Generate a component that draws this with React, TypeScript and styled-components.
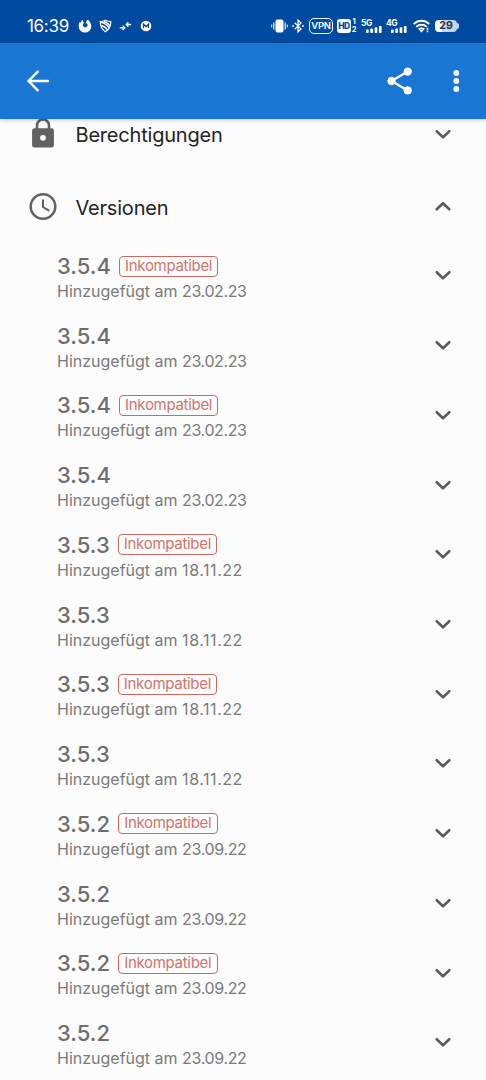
import React from 'react';
import styled, { createGlobalStyle } from 'styled-components';

const GlobalStyle = createGlobalStyle`
  *, *::before, *::after { box-sizing: border-box; }
  body { margin: 0; background: #fcfcfc; font-family: Inter, Roboto, "Liberation Sans", sans-serif; }
  svg { display: block; flex: none; }
`;

const Screen = styled.div`
  width: 486px;
  height: 1080px;
  display: flex;
  flex-direction: column;
  overflow: hidden;
  background: #fcfcfc;
`;

const StatusBar = styled.header`
  height: 43px;
  flex: none;
  display: flex;
  align-items: center;
  padding: 9px 27px 0 27px;
  background: #004a9f;
  color: #fff;
`;

const Clock = styled.span`
  width: 51px;
  font-size: 17px;
  line-height: 20px;
  font-weight: 400;
  letter-spacing: -0.3px;
  white-space: nowrap;
`;

const StatusGroup = styled.div<{ $end?: boolean }>`
  display: flex;
  align-items: center;
  margin-left: ${(p) => (p.$end ? 'auto' : '0')};
`;

const Slot = styled.span<{ $gap: number }>`
  display: block;
  margin-left: ${(p) => p.$gap}px;
`;

const VpnBadge = styled.span`
  width: 24px;
  height: 16px;
  margin-left: 5px;
  border: 1.5px solid #fff;
  border-radius: 5px;
  font-size: 9.5px;
  line-height: 14px;
  font-weight: 600;
  text-align: center;
  letter-spacing: -0.3px;
`;

const HdBadge = styled.span`
  width: 14px;
  height: 14px;
  margin-left: 4px;
  border-radius: 3px;
  background: #fff;
  color: #004a9f;
  font-size: 8.5px;
  line-height: 14px;
  font-weight: 800;
  text-align: center;
  letter-spacing: -0.5px;
`;

const SimNumbers = styled.span`
  display: flex;
  flex-direction: column;
  width: 6px;
  font-size: 7.5px;
  line-height: 8px;
  font-weight: 700;
  text-align: center;
`;

const Signal = styled.span<{ $gap: number }>`
  display: flex;
  flex-direction: column;
  width: 21px;
  height: 14px;
  margin-left: ${(p) => p.$gap}px;
  font-size: 8.5px;
  line-height: 8px;
  font-weight: 700;
  letter-spacing: -0.4px;
`;

const Bars = styled.svg`
  align-self: flex-end;
  margin-top: -2px;
`;

const Battery = styled.span`
  display: flex;
  align-items: center;
  margin-left: 5px;
`;

const BatteryBody = styled.span`
  width: 22px;
  height: 12px;
  border-radius: 4px;
  background: linear-gradient(90deg, #fff 0 30%, #c3d3ea 34%);
  color: #26313f;
  font-size: 10.5px;
  line-height: 12px;
  font-weight: 700;
  text-align: center;
`;

const BatteryTip = styled.span`
  width: 2px;
  height: 6px;
  border-radius: 0 2px 2px 0;
  background: #c3d3ea;
`;

const AppBar = styled.nav`
  position: relative;
  height: 76px;
  flex: none;
  display: flex;
  align-items: center;
  padding: 0 16px 0 24px;
  background: #1976d3;
  box-shadow: 0 1px 4px rgba(0, 0, 0, 0.22);
`;

const IconButton = styled.button<{ $push?: boolean; $gap?: number }>`
  display: flex;
  padding: 0;
  border: 0;
  background: none;
  color: inherit;
  margin-left: ${(p) => (p.$push ? 'auto' : `${p.$gap ?? 0}px`)};
`;

const Content = styled.main`
  flex: 1;
  min-height: 0;
  overflow: hidden;
  color: #606060;
`;

const Sections = styled.div`
  margin-top: -22px;
`;

const SectionRow = styled.section`
  height: 73px;
  display: flex;
  align-items: center;
  padding: 0 29px 0 28px;
`;

const SectionTitle = styled.h2`
  flex: 1;
  margin: 0 0 0 17.5px;
  padding-top: 2px;
  font-size: 20px;
  line-height: 26px;
  font-weight: 400;
  letter-spacing: -0.2px;
  color: #242424;
`;

const VersionList = styled.ul`
  margin: -2.5px 0 0;
  padding: 0;
  list-style: none;
`;

const VersionRow = styled.li`
  height: 69.73px;
  display: flex;
  align-items: center;
  padding: 0 29px 0 57px;
`;

const VersionInfo = styled.div`
  flex: 1;
  padding-top: 5.4px;
`;

const VersionLine = styled.div`
  display: flex;
  align-items: center;
  height: 26px;
  gap: 8px;
`;

const VersionName = styled.span`
  font-size: 22px;
  line-height: 26px;
  font-weight: 500;
  color: #6e6e6e;
`;

const Incompatible = styled.span`
  height: 21px;
  width: 99.5px;
  border: 1.5px solid #cb6a61;
  border-radius: 4px;
  font-size: 15px;
  line-height: 18.5px;
  font-weight: 400;
  letter-spacing: -0.3px;
  text-align: center;
  color: #cf756d;
  white-space: nowrap;
`;

const Added = styled.div`
  font-size: 16px;
  line-height: 24px;
  font-weight: 400;
  color: #7a7a7a;
`;

const AddedDate = styled.span<{ $tracking: number }>`
  letter-spacing: ${(p) => p.$tracking}px;
`;

const Chevron = ({ up = false }: { up?: boolean }) => (
  <svg width="28" height="28" viewBox="0 0 28 28" fill="none" stroke="#5c5c5c" strokeWidth="2.6" strokeLinecap="round">
    <path d={up ? 'M7.7 16.300 14 10.200l6.300 6.100' : 'M7.700 11.200 14 17.300l6.300-6.100'} strokeLinejoin="round" />
  </svg>
);

const LockIcon = () => (
  <svg width="30" height="32" viewBox="0 0 30 32">
    <path d="M9 12V7.500a6 6 0 0 1 12 0V12" fill="none" stroke="#616161" strokeWidth="2.6" />
    <path fillRule="evenodd" fill="#616161" d="M6.600 10.200h16.800a2.500 2.500 0 0 1 2.500 2.500v14.400a2.500 2.500 0 0 1-2.500 2.500H6.600a2.500 2.500 0 0 1-2.500-2.500V12.700a2.500 2.500 0 0 1 2.500-2.500zM15 16.900a2.900 2.900 0 1 0 0 5.800a2.900 2.900 0 0 0 0-5.800z" />
  </svg>
);

const HistoryIcon = () => (
  <svg width="30" height="30" viewBox="0 0 30 30" fill="none" stroke="#616161">
    <circle cx="15" cy="14.500" r="12.300" strokeWidth="2.500" />
    <path d="M15 7.500v7.500l6.300 3.800" strokeWidth="2" />
  </svg>
);

const SignalBars = () => (
  <Bars width="17" height="8" viewBox="0 0 17 8" fill="#fff">
    <rect x="1" y="4.500" width="2.700" height="3.500" rx=".7" />
    <rect x="5.300" y="3.500" width="2.700" height="4.500" rx=".7" />
    <rect x="9.600" y="2.200" width="2.700" height="5.800" rx=".7" />
    <rect x="13.900" y="1" width="2.700" height="7" rx=".7" />
  </Bars>
);

const versions = [
  { name: '3.5.4', date: '23.02.23', tracking: -0.4 },
  { name: '3.5.3', date: '18.11.22', tracking: 0.55 },
  { name: '3.5.2', date: '23.09.22', tracking: -0.35 },
].flatMap((v) => [true, false, true, false].map((incompatible) => ({ ...v, incompatible })));

export default function App() {
  return (
    <>
      <GlobalStyle />
      <Screen>
        <StatusBar>
          <Clock>16:39</Clock>
          <StatusGroup>
            <Slot $gap={0}>
              <svg width="14" height="14" viewBox="0 0 14 14">
                <path fill="#fff" d="M4.600.8C4.500 2 5 2.600 6 3.200L5 5.200c-.8 2.600 2.200 4 3.900 2.500C10.400 6.300 9.500 4.300 7.800 4 8.200 2 9.300.9 10.300.6c0 1.300 3 2.900 3 6.600A6.300 6.300 0 0 1 .7 7.200c0-2 .5-3.500 1.300-4.600l.5 1.300C3 2.700 3.700 1.500 4.600.8z" />
              </svg>
            </Slot>
            <Slot $gap={7}>
              <svg width="13" height="14" viewBox="0 0 13 14" fill="none" stroke="#fff">
                <path d="M1.200 2.500C3.500 2.600 5 2 6.500 1.200 8 2 9.500 2.600 11.800 2.500c0 5-1.500 8-5.300 10.200C2.700 10.500 1.200 7.500 1.200 2.500z" strokeWidth="1.200" />
                <path d="M2 3.400c3 0 5.500 1.800 8.300 5.400M2.200 6.700c3 .2 4.500 1.800 6.300 4.200M5 2.400c2.500.6 4 1.800 6 4" strokeWidth="1.500" />
              </svg>
            </Slot>
            <Slot $gap={7}>
              <svg width="13" height="14" viewBox="0 0 13 14" fill="none" stroke="#fff" strokeWidth="1.300">
                <path d="M.8 8.800h4.700M3.600 6.600 5.800 8.800l-2.200 2.200M12.200 5.500H7.500M9.400 3.300 7.200 5.500l2.200 2.200" />
              </svg>
            </Slot>
            <Slot $gap={8}>
              <svg width="12" height="12" viewBox="0 0 12 12">
                <circle cx="6" cy="6" r="5.300" fill="#fff" />
                <path d="M3.500 8V4.300L6 6.600l2.500-2.300V8" fill="none" stroke="#173f78" strokeWidth="1.300" />
              </svg>
            </Slot>
          </StatusGroup>
          <StatusGroup $end>
            <svg width="17" height="14" viewBox="0 0 17 14" fill="#fff">
              <rect x="4.500" y=".5" width="8" height="13" rx="2" />
              <path d="M2 3.500h1.500v7H2zM0 5.500h1.200v3H0zM13.500 3.500H15v7h-1.500zM15.800 5.500H17v3h-1.200z" opacity=".75" />
            </svg>
            <Slot $gap={4}>
              <svg width="12" height="14" viewBox="0 0 12 14" fill="none" stroke="#fff" strokeWidth="1.300">
                <path d="m2.700 3.800 6.300 6.100-3 2.900V1.200l3 2.900-6.300 6.100" />
                <path d="M.2 7h1.800M10 7h1.800" strokeWidth="1.600" />
              </svg>
            </Slot>
            <VpnBadge>VPN</VpnBadge>
            <HdBadge>HD</HdBadge>
            <SimNumbers>
              <span>1</span>
              <span>2</span>
            </SimNumbers>
            <Signal $gap={4}>
              5G
              <SignalBars />
            </Signal>
            <Signal $gap={4}>
              4G
              <SignalBars />
            </Signal>
            <Slot $gap={6}>
              <svg width="17" height="14" viewBox="0 0 17 14" fill="none" stroke="#fff" strokeWidth="1.900">
                <path d="M.8 5c4.400-4.300 11-4.300 15.400 0M3.200 7.900c3.100-2.900 7.500-2.900 10.600 0M5.700 10.500c1.700-1.500 3.900-1.500 5.600 0" />
                <path d="m6.500 11.600 2-1 2 1-2 2z" fill="#fff" stroke="none" />
                <path d="M14.500 8.700v2M14.500 11.600v1.700" strokeWidth="1.600" />
              </svg>
            </Slot>
            <Battery>
              <BatteryBody>29</BatteryBody>
              <BatteryTip />
            </Battery>
          </StatusGroup>
        </StatusBar>
        <AppBar>
          <IconButton aria-label="Zurück">
            <svg width="28" height="28" viewBox="0 0 28 28" fill="none" stroke="#fff" strokeWidth="2.400" strokeLinecap="round" strokeLinejoin="round">
              <path d="M24 14H4.500M13.800 4.600 4.400 14l9.400 9.400" />
            </svg>
          </IconButton>
          <IconButton $push aria-label="Teilen">
            <svg width="28" height="30" viewBox="0 0 28 30" fill="#fff" stroke="#fff">
              <path d="M5.500 15 21.700 5.600M5.500 15l16.200 9.400" strokeWidth="2.300" />
              <circle cx="5.500" cy="15" r="3.700" />
              <circle cx="21.700" cy="5.600" r="3.700" />
              <circle cx="21.700" cy="24.400" r="3.700" />
            </svg>
          </IconButton>
          <IconButton $gap={28} aria-label="Mehr">
            <svg width="28" height="28" viewBox="0 0 28 28" fill="#fff">
              <circle cx="14.300" cy="6" r="2.900" />
              <circle cx="14.300" cy="14" r="2.900" />
              <circle cx="14.300" cy="22" r="2.900" />
            </svg>
          </IconButton>
        </AppBar>
        <Content>
          <Sections>
            <SectionRow>
              <LockIcon />
              <SectionTitle>Berechtigungen</SectionTitle>
              <Chevron />
            </SectionRow>
            <SectionRow>
              <HistoryIcon />
              <SectionTitle>Versionen</SectionTitle>
              <Chevron up />
            </SectionRow>
            <VersionList>
              {versions.map((v, i) => (
                <VersionRow key={i}>
                  <VersionInfo>
                    <VersionLine>
                      <VersionName>{v.name}</VersionName>
                      {v.incompatible && <Incompatible>Inkompatibel</Incompatible>}
                    </VersionLine>
                    <Added>
                      Hinzugefügt am <AddedDate $tracking={v.tracking}>{v.date}</AddedDate>
                    </Added>
                  </VersionInfo>
                  <Chevron />
                </VersionRow>
              ))}
            </VersionList>
          </Sections>
        </Content>
      </Screen>
    </>
  );
}
